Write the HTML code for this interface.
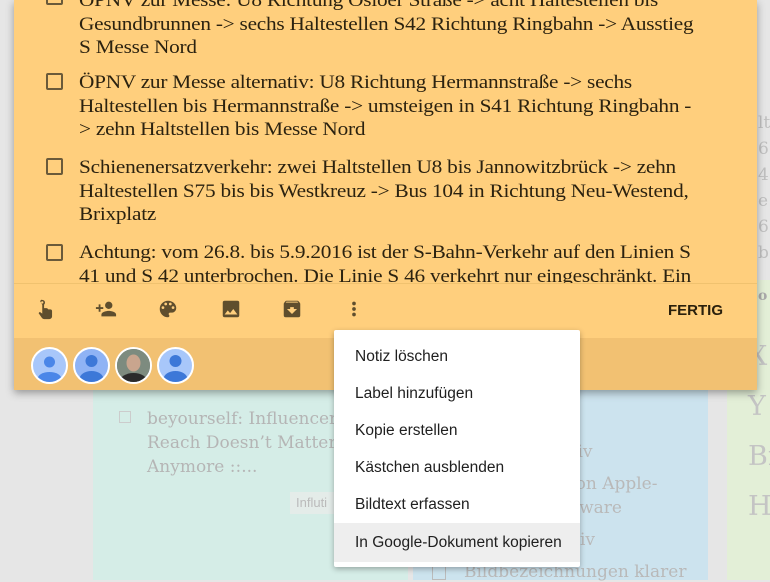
<!DOCTYPE html>
<html><head><meta charset="utf-8">
<style>
*{margin:0;padding:0;box-sizing:border-box}
body{width:770px;height:578px;overflow:hidden;background:#e6e6e6;position:relative;font-family:"Liberation Sans",sans-serif}
.bg{position:absolute;font-family:"DejaVu Serif","Liberation Serif",serif;color:#b9b9b9}
.teal{left:93px;top:380px;width:315px;height:200px;background:#d5ede7}
.blue{left:413px;top:380px;width:295px;height:200px;background:#cce3ee}
.green{left:727px;top:280px;width:60px;height:300px;background:#e3efd7}
.note{position:absolute;left:14px;top:0;width:743px;height:390px;background:#ffcf7d;box-shadow:0 3px 8px rgba(0,0,0,.35);overflow:hidden}
.item{position:absolute;left:65px;width:620px;font-family:"Liberation Serif",serif;font-size:18.5px;line-height:23.5px;color:#2b2210;letter-spacing:-.2px;white-space:nowrap;transform:scaleX(1.15);transform-origin:0 0}
.cb{position:absolute;left:32px;width:17px;height:17px;border:2px solid #6a5a3a;border-radius:2px}
.tool{position:absolute;top:283px;left:0;width:743px;height:55px;border-top:1px solid #f0c26f}
.band{position:absolute;top:338px;left:0;width:743px;height:52px;background:#f2c172}
.ico{position:absolute;top:298px}
.av{position:absolute;top:347px;width:37px;height:37px;border-radius:50%;border:2px solid #fff;background:#a8c7fa;overflow:hidden}
.fertig{position:absolute;left:654px;top:302px;font-weight:bold;font-size:15px;color:#2a200c}
.menu{position:absolute;left:334px;top:330px;width:246px;height:237px;background:#fff;box-shadow:0 2px 6px rgba(0,0,0,.3);border-radius:2px}
.mi{position:absolute;left:0;width:246px;height:37px;padding-left:21px;line-height:37px;font-size:15.5px;color:#202020}
</style></head><body>
<div class="bg teal"></div>
<div class="bg blue"></div>
<div class="bg green"></div>
<div class="bg" style="left:147px;top:407px;font-size:17px;line-height:24px;color:#b5b5b5">beyourself: Influencer<br>Reach Doesn’t Matter<br>Anymore ::...</div>
<div style="position:absolute;left:119px;top:411px;width:12px;height:12px;border:1px solid #ccc"></div>
<div style="position:absolute;left:290px;top:492px;width:50px;height:22px;background:#e4ece9;color:#bbb;font-size:13px;line-height:22px;padding-left:6px">Influti</div>
<div class="bg" style="left:560px;top:440px;font-size:17px;line-height:24px">ssiv</div>
<div class="bg" style="left:566px;top:472px;font-size:17px;line-height:24px">von Apple-<br>ftware</div>
<div class="bg" style="left:580px;top:530px;font-size:17px">iv</div>
<div class="bg" style="left:464px;top:562px;font-size:17px">Bildbezeichnungen klarer</div>
<div style="position:absolute;left:432px;top:566px;width:14px;height:14px;border:1px solid #bbb"></div>
<div class="bg" style="left:748px;top:332px;font-size:27px;line-height:50px;color:#c4c4c4">X<br>Y<br>Br<br>H</div>
<div class="bg" style="left:758px;top:110px;font-size:17px;line-height:26px;color:#c0c0c0">lt<br>6<br>4<br>e<br>6<br>b</div>
<div class="bg" style="left:758px;top:288px;font-size:14px;color:#aaa;font-weight:bold">o</div>

<div class="note">
<div class="cb" style="top:-12px"></div>
<div class="item" style="top:-10px">ÖPNV zur Messe: U8 Richtung Osloer Straße -> acht Haltestellen bis<br>Gesundbrunnen -> sechs Haltestellen S42 Richtung Ringbahn -> Ausstieg<br>S Messe Nord</div>
<div class="cb" style="top:73px"></div>
<div class="item" style="top:72px">ÖPNV zur Messe alternativ: U8 Richtung Hermannstraße -> sechs<br>Haltestellen bis Hermannstraße -> umsteigen in S41 Richtung Ringbahn -<br>> zehn Haltstellen bis Messe Nord</div>
<div class="cb" style="top:158px"></div>
<div class="item" style="top:157px">Schienenersatzverkehr: zwei Haltstellen U8 bis Jannowitzbrück -> zehn<br>Haltestellen S75 bis bis Westkreuz -> Bus 104 in Richtung Neu-Westend,<br>Brixplatz</div>
<div class="cb" style="top:244px"></div>
<div class="item" style="top:242px">Achtung: vom 26.8. bis 5.9.2016 ist der S-Bahn-Verkehr auf den Linien S<br>41 und S 42 unterbrochen. Die Linie S 46 verkehrt nur eingeschränkt. Ein</div>
<div class="tool" style="background:#ffcf7d"></div>
<svg class="ico" style="left:20px" width="22" height="22" viewBox="0 0 24 24"><path fill="#5f4e2d" d="M9 2a3 3 0 0 1 3 3c0 1-.5 1.7-1 2.2V11h2.5a2 2 0 0 1 2 1.4h2.2a2 2 0 0 1 2 2V20a3 3 0 0 1-3 3H11a3 3 0 0 1-2.4-1.3L5 16.5l1.3-1.3L9 17V7.2C8.4 6.7 8 6 8 5a1 1 0 0 1 1-3zm0 1.5a1.3 1.3 0 0 0 0 2.6 1.3 1.3 0 0 0 0-2.6z"/></svg>
<svg class="ico" style="left:80px" width="24" height="22" viewBox="0 0 24 24"><path fill="#5f4e2d" d="M15 12a4 4 0 1 0 0-8 4 4 0 0 0 0 8zm-9-2V7H4v3H1v2h3v3h2v-3h3v-2H6zm9 4c-2.7 0-8 1.3-8 4v2h16v-2c0-2.7-5.3-4-8-4z"/></svg>
<svg class="ico" style="left:143px" width="22" height="22" viewBox="0 0 24 24"><path fill="#5f4e2d" d="M12 3a9 9 0 0 0 0 18c.8 0 1.5-.7 1.5-1.5 0-.4-.1-.7-.4-1-.2-.3-.4-.6-.4-1 0-.8.7-1.5 1.5-1.5H16a5 5 0 0 0 5-5c0-4.400-4-8-9-8zM6.5 12a1.5 1.5 0 1 1 0-3 1.5 1.5 0 0 1 0 3zm3-4a1.5 1.5 0 1 1 0-3 1.5 1.5 0 0 1 0 3zm5 0a1.5 1.5 0 1 1 0-3 1.5 1.5 0 0 1 0 3zm3 4a1.5 1.5 0 1 1 0-3 1.5 1.5 0 0 1 0 3z"/></svg>
<svg class="ico" style="left:206px" width="22" height="22" viewBox="0 0 24 24"><path fill="#5f4e2d" d="M21 19V5a2 2 0 0 0-2-2H5a2 2 0 0 0-2 2v14a2 2 0 0 0 2 2h14a2 2 0 0 0 2-2zM8.5 13.5l2.5 3 3.5-4.5 4.5 6H5l3.5-4.5z"/></svg>
<svg class="ico" style="left:267px" width="22" height="22" viewBox="0 0 24 24"><path fill="#5f4e2d" d="M20.5 5.2 19.1 3.5A1.5 1.5 0 0 0 18 3H6c-.5 0-.9.2-1.2.5L3.5 5.2C3.2 5.6 3 6 3 6.5V19a2 2 0 0 0 2 2h14a2 2 0 0 0 2-2V6.5c0-.5-.2-.9-.5-1.300zM12 17.5 6.5 12H10v-2h4v2h3.5L12 17.5zM5.1 5l.8-1h12l.9 1H5.1z"/></svg>
<svg class="ico" style="left:329px" width="22" height="22" viewBox="0 0 24 24"><path fill="#5f4e2d" d="M12 8a2 2 0 1 0 0-4 2 2 0 0 0 0 4zm0 2a2 2 0 1 0 0 4 2 2 0 0 0 0-4zm0 6a2 2 0 1 0 0 4 2 2 0 0 0 0-4z"/></svg>
<div class="fertig">FERTIG</div>
<div class="band"></div>
</div>
<div class="av" style="left:31px"><svg width="33" height="33" viewBox="0 0 33 33"><circle cx="16.5" cy="13" r="5.5" fill="#4a86e8"/><ellipse cx="16.5" cy="30" rx="12" ry="7" fill="#4a86e8"/></svg></div>
<div class="av" style="left:73px;background:#8fb3f5"><svg width="33" height="33" viewBox="0 0 33 33"><circle cx="16.5" cy="12" r="6" fill="#3d78d8"/><ellipse cx="16.5" cy="30" rx="12" ry="8" fill="#3d78d8"/></svg></div>
<div class="av" style="left:115px;background:#6b7a70"><svg width="33" height="33" viewBox="0 0 33 33"><rect width="33" height="33" fill="#7d8b7f"/><ellipse cx="16.5" cy="14" rx="7" ry="8.5" fill="#c9a58e"/><ellipse cx="16.5" cy="33" rx="14" ry="9" fill="#2b2b2b"/></svg></div>
<div class="av" style="left:157px;background:#a8c7fa"><svg width="33" height="33" viewBox="0 0 33 33"><circle cx="16.5" cy="12" r="6" fill="#3d78d8"/><ellipse cx="16.5" cy="30" rx="12" ry="8" fill="#3d78d8"/></svg></div>

<div class="menu">
<div class="mi" style="top:8px">Notiz löschen</div>
<div class="mi" style="top:45px">Label hinzufügen</div>
<div class="mi" style="top:82px">Kopie erstellen</div>
<div class="mi" style="top:119px">Kästchen ausblenden</div>
<div class="mi" style="top:156px">Bildtext erfassen</div>
<div class="mi" style="top:193px;background:#eeeeee;height:39px;line-height:39px">In Google-Dokument kopieren</div>
</div>
</body></html>
